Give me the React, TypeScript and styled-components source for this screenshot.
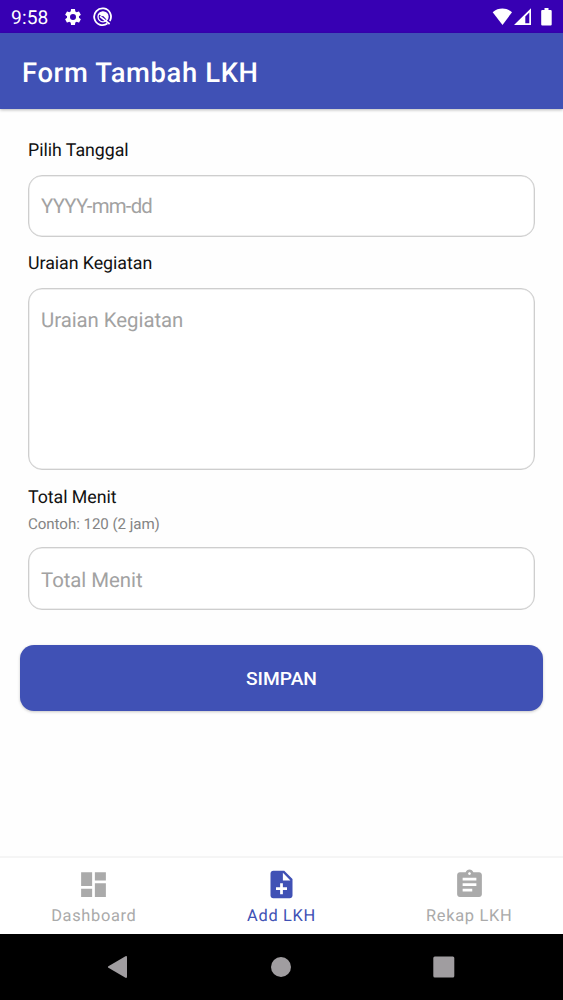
import React from 'react';
import styled, { createGlobalStyle } from 'styled-components';

const GlobalStyle = createGlobalStyle`
  * { box-sizing: border-box; }
  body { margin: 0; background: #fefefe; font-family: Roboto, "Liberation Sans", sans-serif; text-rendering: geometricPrecision; }
  svg { display: block; flex: none; }
`;

const Screen = styled.div`
  display: flex;
  flex-direction: column;
  width: 563px;
  height: 1000px;
  background: #fefefe;
  overflow: hidden;
`;

const StatusBar = styled.header`
  display: flex;
  align-items: center;
  height: 33px;
  flex: none;
  padding: 0 11px;
  background: #3700b3;
  color: #fff;
`;

const Clock = styled.span`
  width: 52px;
  font-size: 19.2px;
  line-height: 22px;
  letter-spacing: 0.1px;
  padding-top: 2px;
`;

const StatusIcons = styled.div<{ $gap: number }>`
  display: flex;
  align-items: center;
  gap: ${(p) => p.$gap}px;
`;

const Spacer = styled.div`
  flex: 1;
`;

const AppBar = styled.div`
  display: flex;
  align-items: center;
  height: 76px;
  flex: none;
  padding: 3px 22px 0;
  background: #4051b5;
  color: #fff;
  box-shadow: 0 1px 3px rgba(0, 0, 0, 0.28);
`;

const Title = styled.h1`
  margin: 0;
  font-size: 27.4px;
  font-weight: 500;
  line-height: 32px;
  letter-spacing: 0.62px;
`;

const Form = styled.main`
  display: flex;
  flex-direction: column;
  flex: 1;
  padding: 29px 20px 0;
`;

const Group = styled.section<{ $after: number }>`
  display: flex;
  flex-direction: column;
  margin: 0 8px ${(p) => p.$after}px;
`;

const Label = styled.label`
  height: 24px;
  padding-top: 1px;
  font-size: 17.8px;
  line-height: 24px;
  letter-spacing: -0.04px;
  color: #111;
`;

const Hint = styled.span`
  height: 20px;
  margin-top: 5px;
  font-size: 15.1px;
  line-height: 20px;
  letter-spacing: -0.05px;
  color: #848484;
`;

const Field = styled.div<{ $height: number; $top: number; $inset?: number }>`
  height: ${(p) => p.$height}px;
  margin-top: ${(p) => p.$top}px;
  padding: ${(p) => p.$inset ?? 18.5}px 12px 0;
  border: 1px solid #cecece;
  border-radius: 14px;
  background: #fff;
  box-shadow: inset 0 0 0 0.5px #dedede;
  font-size: 20.4px;
  line-height: 24px;
  letter-spacing: -0.05px;
  color: #a2a2a2;
`;

const DateHint = styled.span`
  letter-spacing: -0.8px;
`;

const SaveButton = styled.button`
  height: 66px;
  padding-top: 2px;
  border: 0;
  border-radius: 14px;
  background: #4051b5;
  color: #fff;
  font: 500 19.2px/22px Roboto, sans-serif;
  box-shadow: 0 1px 3px rgba(0, 0, 0, 0.22);
`;

const BottomNav = styled.nav`
  display: flex;
  height: 78px;
  flex: none;
  border-top: 2px solid #f5f5f5;
  background: #fff;
`;

const NavItem = styled.a<{ $active?: boolean }>`
  display: flex;
  flex: 1;
  flex-direction: column;
  align-items: center;
  padding-top: 10px;
  color: ${(p) => (p.$active ? '#4051b5' : '#aaa')};
  font-size: 16.4px;
  line-height: 20px;
  letter-spacing: 0.68px;

  span { margin-top: 6px; }
`;

const SystemNav = styled.footer`
  display: flex;
  align-items: center;
  height: 66px;
  flex: none;
  padding: 0 108px 0 107px;
  justify-content: space-between;
  background: #000;
  color: #a09da0;
`;

type IconProps = { d: string; size: number };
const Icon = ({ d, size }: IconProps) => (
  <svg width={size} height={size} viewBox="0 0 24 24" fill="currentColor">
    <path fillRule="evenodd" d={d} />
  </svg>
);

const paths = {
  gear: 'M19.14 12.94c.04-.3.06-.61.06-.94 0-.32-.02-.64-.07-.94l2.03-1.58c.18-.14.23-.41.12-.61l-1.92-3.32c-.12-.22-.37-.29-.59-.22l-2.39.96c-.5-.38-1.03-.7-1.62-.94l-.36-2.54c-.04-.24-.24-.41-.48-.41h-3.84c-.24 0-.43.17-.47.41l-.36 2.54c-.59.24-1.13.57-1.62.94l-2.39-.96c-.22-.08-.47 0-.59.22L2.74 8.87c-.12.21-.08.47.12.61l2.03 1.58c-.05.3-.09.63-.09.94s.02.64.07.94l-2.03 1.58c-.18.14-.23.41-.12.61l1.92 3.32c.12.22.37.29.59.22l2.39-.96c.5.38 1.03.7 1.62.94l.36 2.54c.05.24.24.41.48.41h3.84c.24 0 .44-.17.47-.41l.36-2.54c.59-.24 1.13-.56 1.62-.94l2.39.96c.22.08.47 0 .59-.22l1.92-3.32c.12-.22.07-.47-.12-.61zM12 15.6A3.6 3.6 0 1 1 12 8.4a3.6 3.6 0 0 1 0 7.2z',
  dashboard: 'M3 13h8V3H3v10zm0 8h8v-6H3v6zm10 0h8V11h-8v10zm0-18v6h8V3h-8z',
  addFile: 'M14 2H6c-1.1 0-2 .9-2 2v16c0 1.1.89 2 1.99 2H18c1.1 0 2-.9 2-2V8l-6-6zm2 14h-3v3h-2v-3H8v-2h3v-3h2v3h3v2zm-3-7V3.5L18.5 9H13z',
  clipboard: 'M19 3h-4.18C14.4 1.84 13.3 1 12 1s-2.4.84-2.82 2H5c-1.1 0-2 .9-2 2v14c0 1.1.9 2 2 2h14c1.1 0 2-.9 2-2V5c0-1.1-.9-2-2-2zm-7 0c.55 0 1 .45 1 1s-.45 1-1 1-1-.45-1-1 .45-1 1-1zm2 14H7v-2h7v2zm3-4H7v-2h10v2zm0-4H7V7h10v2z',
};

export default function App() {
  return (
    <>
      <GlobalStyle />
      <Screen>
        <StatusBar>
          <Clock>9:58</Clock>
          <StatusIcons $gap={10}>
            <Icon d={paths.gear} size={20} />
            <svg width="20" height="20" viewBox="0 0 20 20" fill="none" stroke="#fff">
              <path d="M14.4 16.6A8.4 8.4 0 1 1 16.8 14" strokeWidth="1.8" />
              <circle cx="10" cy="9.8" r="5" strokeWidth="1.3" />
              <path d="M5.8 7.2A5 5 0 0 1 14.8 11.3L13.7 12.8 10.5 9.2 8.3 9z" fill="#fff" stroke="none" />
              <path d="M7 9.300l9.600 7.700" strokeWidth="1.700" />
            </svg>
          </StatusIcons>
          <Spacer />
          <StatusIcons $gap={2}>
            <svg width="20" height="18" viewBox="0 0 20 18" fill="#fff">
              <path d="M10.5 17L.7 4.2C3.7 1.7 7 .6 10.5 .6s6.5 1.1 9.5 3.6z" />
            </svg>
            <svg width="18" height="18" viewBox="0 0 18 18" fill="#fff">
              <path fillRule="evenodd" d="M0 17L17 .3V17zM11.3 15.3h4V4.6L11.3 8.6z" />
            </svg>
            <svg width="18" height="18" viewBox="0 0 18 18" fill="#fff">
              <path d="M10.5 0h4v1.9h2.1q1.1 0 1.1 1.1v13.4q0 1.1-1.1 1.1H8.3q-1.1 0-1.1-1.1V3q0-1.1 1.1-1.1h2.2z" />
            </svg>
          </StatusIcons>
        </StatusBar>
        <AppBar>
          <Title>Form Tambah LKH</Title>
        </AppBar>
        <Form>
          <Group $after={14}>
            <Label>Pilih Tanggal</Label>
            <Field $height={61.5} $top={13} $inset={18}>
              <DateHint>YYYY-mm-dd</DateHint>
            </Field>
          </Group>
          <Group $after={15}>
            <Label>Uraian Kegiatan</Label>
            <Field $height={182} $top={13.5}>Uraian Kegiatan</Field>
          </Group>
          <Group $after={35}>
            <Label>Total Menit</Label>
            <Hint>Contoh: 120 (2 jam)</Hint>
            <Field $height={63} $top={13} $inset={19.5}>Total Menit</Field>
          </Group>
          <SaveButton>SIMPAN</SaveButton>
        </Form>
        <BottomNav>
          <NavItem>
            <Icon d={paths.dashboard} size={33} />
            <span>Dashboard</span>
          </NavItem>
          <NavItem $active>
            <Icon d={paths.addFile} size={33} />
            <span>Add LKH</span>
          </NavItem>
          <NavItem>
            <Icon d={paths.clipboard} size={33} />
            <span>Rekap LKH</span>
          </NavItem>
        </BottomNav>
        <SystemNav>
          <svg width="22" height="24" viewBox="0 0 22 24" fill="currentColor">
            <path d="M1.4 11.2L18.5 1.2Q20 .6 20 2.2v19.6q0 1.6-1.5 1L1.4 12.8q-1.2-.8 0-1.6z" />
          </svg>
          <svg width="20" height="20" viewBox="0 0 20 20" fill="currentColor">
            <circle cx="10" cy="10" r="10" />
          </svg>
          <svg width="22" height="22" viewBox="0 0 22 22" fill="currentColor">
            <rect x=".3" y=".5" width="21" height="21" rx="1.5" />
          </svg>
        </SystemNav>
      </Screen>
    </>
  );
}
